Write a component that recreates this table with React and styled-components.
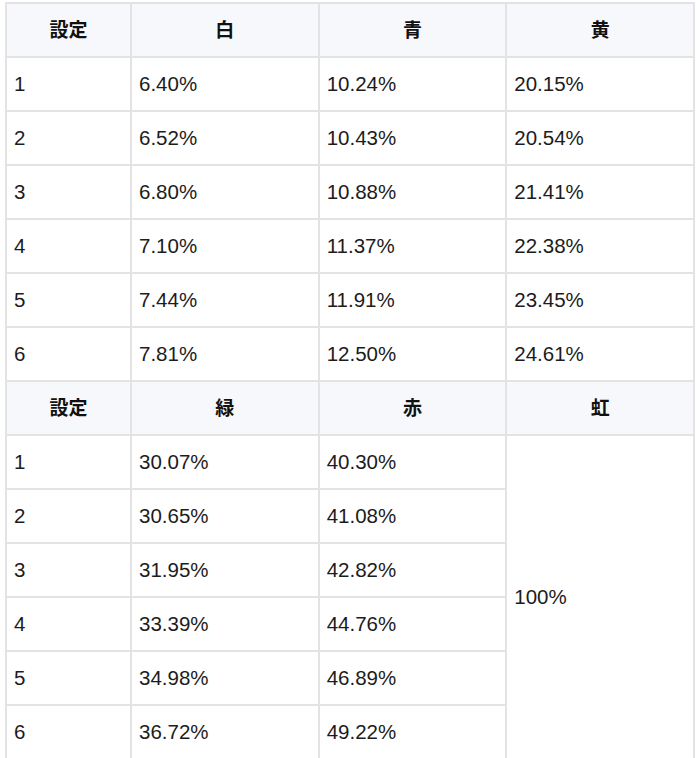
import React from "react";
import styled, { createGlobalStyle } from "styled-components";

const GlobalStyle = createGlobalStyle`
  body {
    margin: 0;
    background: #fff;
    font-family: "Liberation Sans", "Noto Sans CJK JP", sans-serif;
  }
`;

const Wrapper = styled.div`
  padding: 2px 5px 0 5px;
`;

const Table = styled.table`
  width: 100%;
  border-collapse: collapse;
  table-layout: fixed;
  color: #1c1c1c;
  font-size: 20.5px;
`;

const HeadCell = styled.th`
  height: 48px;
  padding: 0 8px 4px;
  border: 2px solid #e3e3e3;
  background: #f6f8fb;
  color: #111;
  font-size: 19px;
  font-weight: bold;
  text-align: center;
`;

const Cell = styled.td`
  height: 52px;
  padding: 0 7px;
  border: 2px solid #e3e3e3;
  text-align: left;
  vertical-align: middle;
`;

const sections = [
  {
    heads: ["白", "青", "黄"],
    rows: [
      ["6.40%", "10.24%", "20.15%"],
      ["6.52%", "10.43%", "20.54%"],
      ["6.80%", "10.88%", "21.41%"],
      ["7.10%", "11.37%", "22.38%"],
      ["7.44%", "11.91%", "23.45%"],
      ["7.81%", "12.50%", "24.61%"],
    ],
  },
  {
    heads: ["緑", "赤", "虹"],
    rows: [
      ["30.07%", "40.30%"],
      ["30.65%", "41.08%"],
      ["31.95%", "42.82%"],
      ["33.39%", "44.76%"],
      ["34.98%", "46.89%"],
      ["36.72%", "49.22%"],
    ],
    merged: "100%",
  },
];

const App = () => {
  return (
    <Wrapper>
      <GlobalStyle />
      <Table>
        <colgroup>
          <col style={{ width: 125 }} />
          <col />
          <col />
          <col />
        </colgroup>
        {sections.map((section, si) => (
          <tbody key={si}>
            <tr>
              <HeadCell>設定</HeadCell>
              {section.heads.map((h) => (
                <HeadCell key={h}>{h}</HeadCell>
              ))}
            </tr>
            {section.rows.map((row, ri) => (
              <tr key={ri}>
                <Cell>{ri + 1}</Cell>
                {row.map((v) => (
                  <Cell key={v}>{v}</Cell>
                ))}
                {section.merged && ri === 0 && (
                  <Cell rowSpan={section.rows.length}>{section.merged}</Cell>
                )}
              </tr>
            ))}
          </tbody>
        ))}
      </Table>
    </Wrapper>
  );
};

export default App;
